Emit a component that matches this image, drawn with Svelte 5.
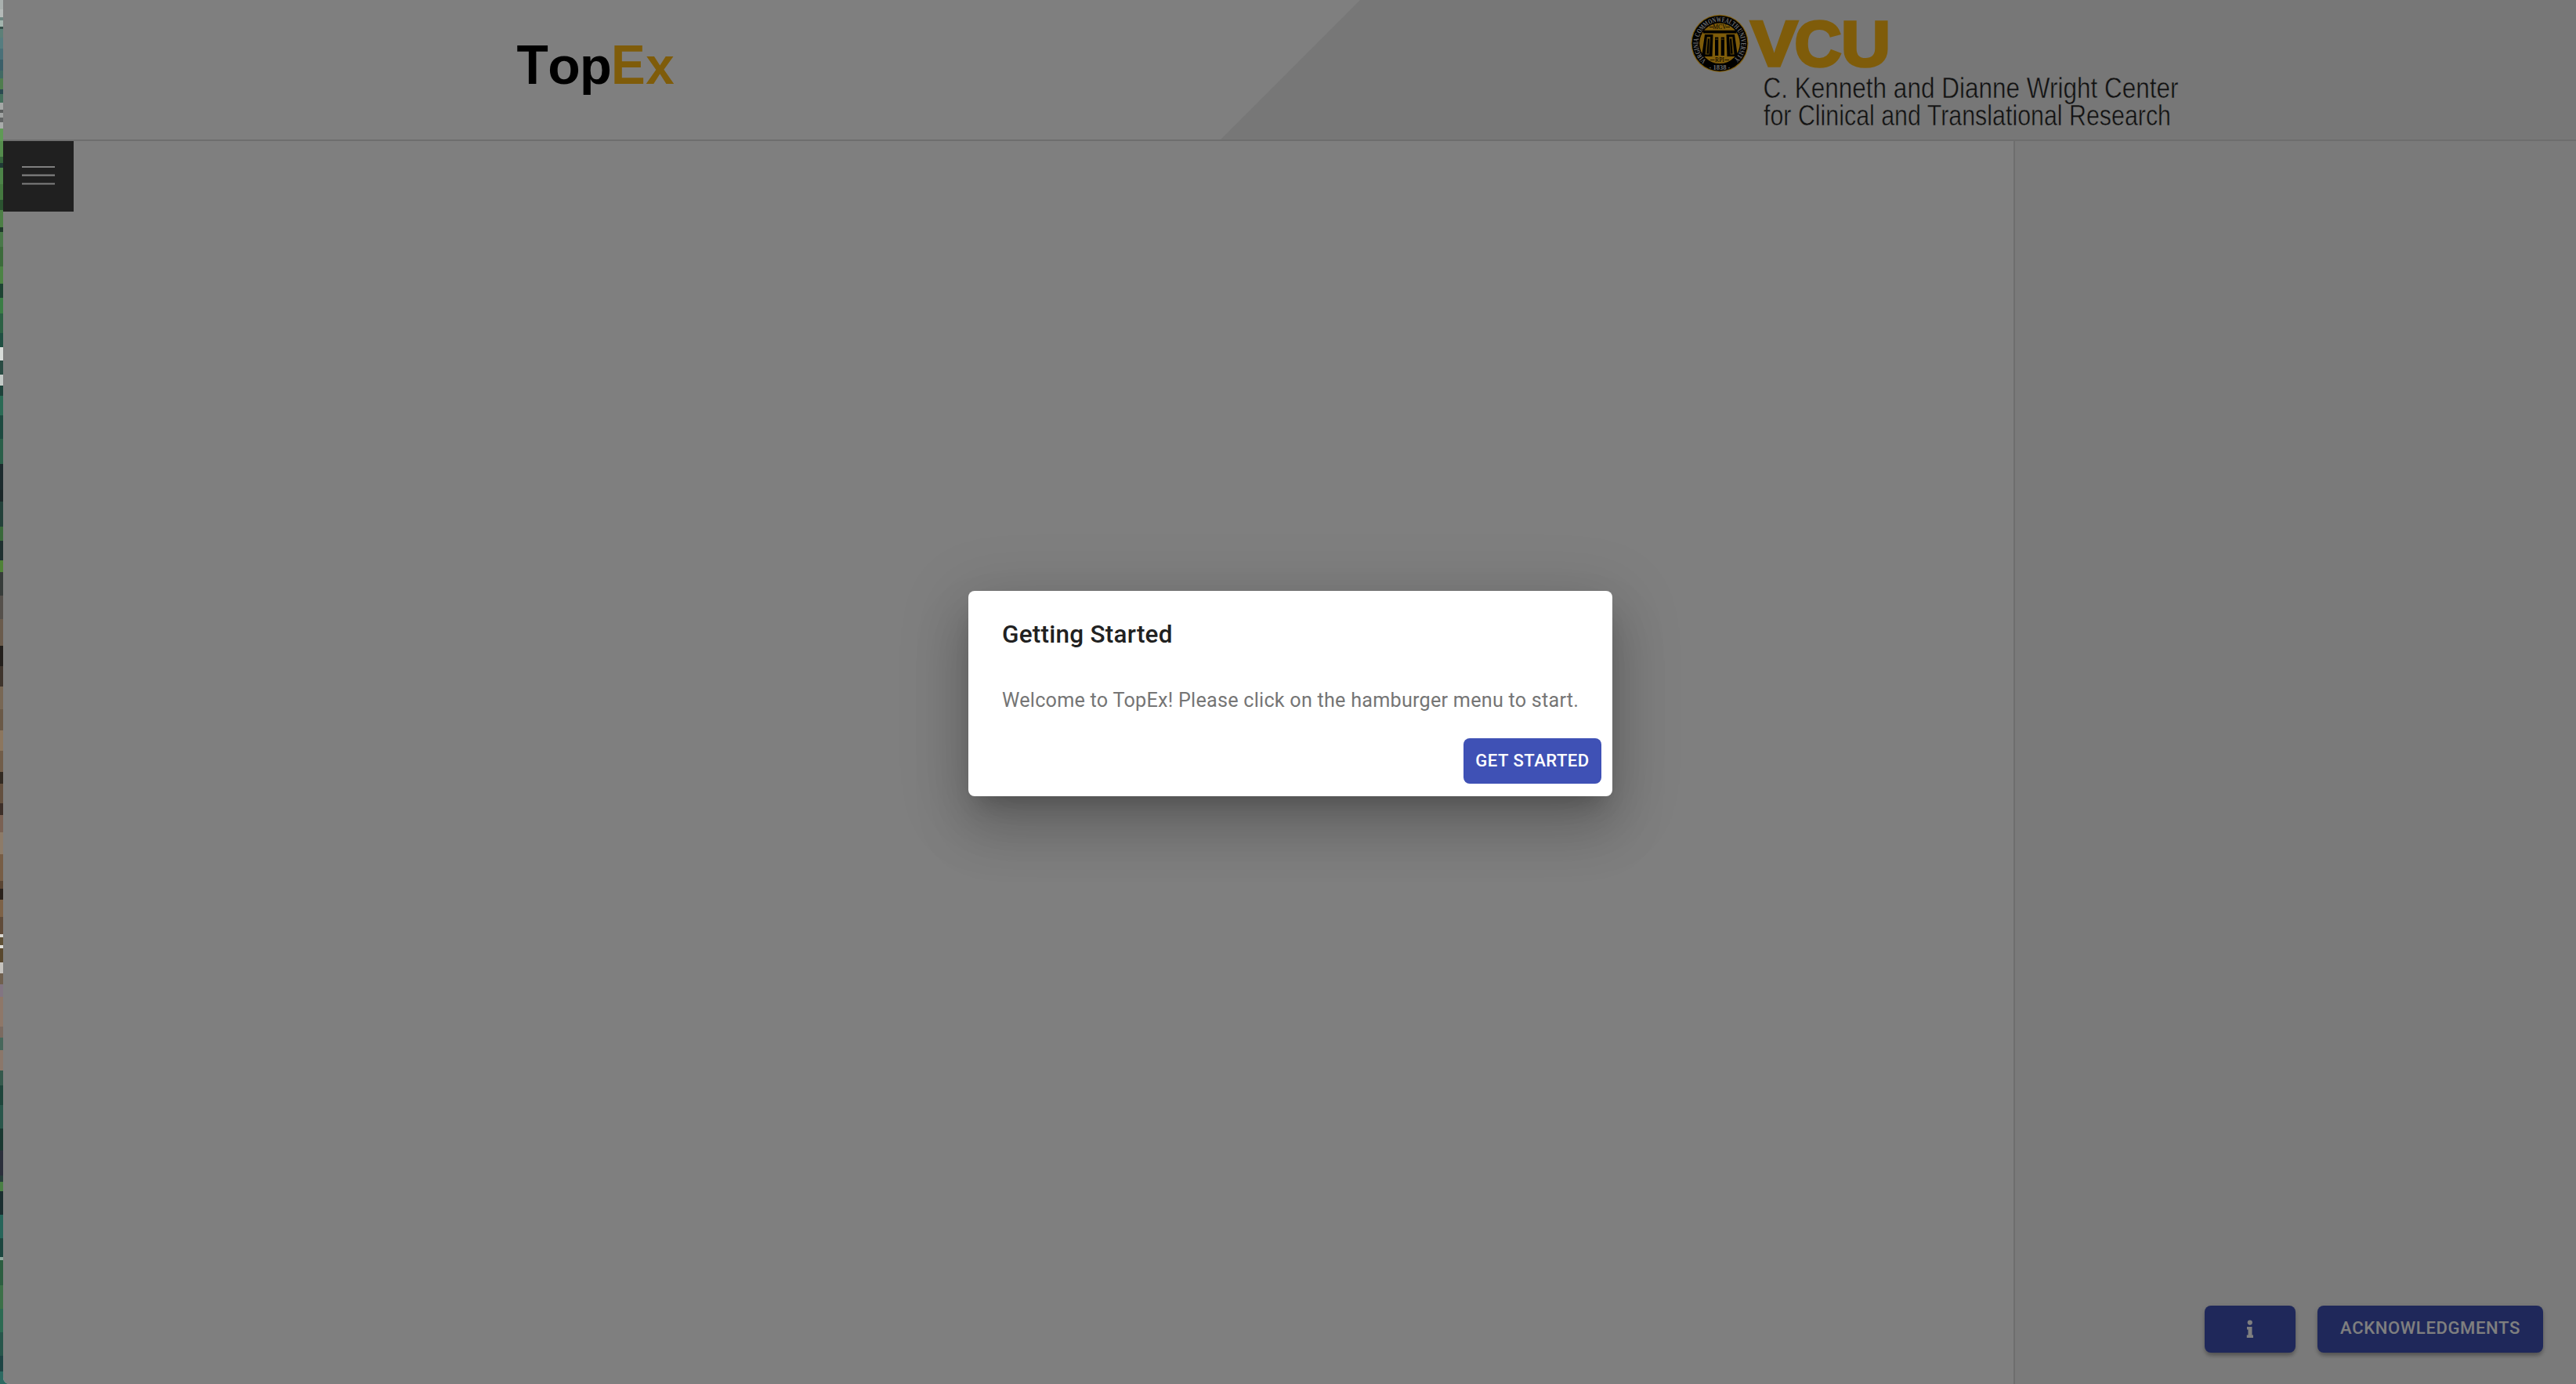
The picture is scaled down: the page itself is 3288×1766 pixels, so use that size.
<script>
  // Colours of the desktop wallpaper visible beside the window: [start y, colour]
  const wallpaper = [
    [0, '#a9b0ae'], [12, '#b4bab8'], [22, '#6d8580'], [26, '#a3b5ae'], [34, '#35504a'], [37, '#5d8078'],
    [48, '#567d80'], [62, '#4a7078'], [76, '#3b5f69'], [90, '#416a64'], [100, '#4f7d4e'], [114, '#2b4a50'],
    [120, '#456f5c'], [131, '#a5a8a6'], [140, '#5b5e5e'], [144, '#a0a3a2'], [150, '#626565'], [156, '#a9acab'],
    [164, '#5f9a55'], [180, '#548c4c'], [200, '#37663c'], [208, '#1f3a35'], [214, '#4d8448'], [235, '#44783f'],
    [255, '#2b5330'], [268, '#4c7f45'], [290, '#1e3a2a'], [296, '#497849'], [315, '#3c6b3b'], [340, '#4c8344'],
    [362, '#1d4433'], [380, '#3a7d45'], [400, '#2c6144'], [425, '#1f4f42'], [443, '#d8dcd9'], [460, '#2a4b43'],
    [478, '#c4cac7'], [492, '#1d423a'], [505, '#2b6a55'], [530, '#1d4a40'], [560, '#2a5f49'], [592, '#1c2b2e'],
    [625, '#1a2628'], [640, '#23413a'], [672, '#39693a'], [690, '#1f3030'], [715, '#4f8237'], [730, '#373c3a'],
    [760, '#55504b'], [790, '#6a5b4c'], [824, '#231f1c'], [850, '#3f352d'], [876, '#786754'], [905, '#6a5947'],
    [932, '#8c765e'], [958, '#715d49'], [985, '#322a22'], [1000, '#64503f'], [1025, '#3d2f29'], [1040, '#7a6153'],
    [1062, '#8d7b68'], [1090, '#775d45'], [1124, '#5a4533'], [1134, '#2a221c'], [1148, '#7d6247'],
    [1170, '#604b39'], [1192, '#dad8d2'], [1196, '#5f5036'], [1206, '#e0ded8'], [1210, '#59482e'],
    [1228, '#c6c3be'], [1242, '#70604f'], [1256, '#827582'], [1272, '#8e7768'], [1310, '#7b6a60'],
    [1324, '#47675b'], [1340, '#8b776a'], [1366, '#35594c'], [1385, '#1e453b'], [1410, '#29564b'],
    [1440, '#193831'], [1468, '#2b2f3b'], [1500, '#263e3a'], [1508, '#4a8045'], [1520, '#1a2e30'],
    [1550, '#27655a'], [1580, '#1c463f'], [1604, '#8ca79c'], [1608, '#2c5e40'], [1640, '#3c7048'],
    [1670, '#2c6a52'], [1700, '#27564b'], [1730, '#1d4444'], [1750, '#2d6a62'], [1766, '#28605a']
  ];
  const bands = wallpaper.slice(0, -1).map(([y, fill], i) => ({ y, fill, h: wallpaper[i + 1][0] - y }));
</script>

<div class="desktop">
  <svg class="wallpaper" viewBox="0 0 8 1766" preserveAspectRatio="none" aria-hidden="true">
    {#each bands as b}
      <rect x="0" y={b.y} width="8" height={b.h} fill={b.fill} />
    {/each}
  </svg>

  <div class="window">
    <header>
      <div class="brand">
        <svg class="topex" viewBox="0 0 260 80" role="img" aria-label="TopEx">
          <text y="66" font-family="Liberation Sans, sans-serif" font-weight="700" font-size="69.5"><tspan x="19.6" textLength="40.3" lengthAdjust="spacingAndGlyphs">T</tspan><tspan x="59.2" font-size="66" textLength="41.5" lengthAdjust="spacingAndGlyphs">o</tspan><tspan x="100" font-size="66" textLength="40.8" lengthAdjust="spacingAndGlyphs">p</tspan><tspan x="140" fill="#ffb914" textLength="43.7" lengthAdjust="spacingAndGlyphs">E</tspan><tspan x="184.3" font-size="66" fill="#ffb914" textLength="36.4" lengthAdjust="spacingAndGlyphs">x</tspan></text>
        </svg>
      </div>
      <div class="partner">
        <svg class="vcu" viewBox="2150 0 720 178" role="img" aria-label="VCU Wright Center">
          <circle cx="2195" cy="55.3" r="36.6" fill="#ffb914" />
          <circle cx="2195" cy="55.3" r="35.4" fill="#000" />
          <circle cx="2195" cy="55.3" r="25.8" fill="#ffb914" />
          <path id="lettering" fill="none" d="M2178 76.8 A27.4 27.4 0 1 1 2212 76.8" />
          <text font-family="Liberation Serif, serif" font-size="9.3" font-weight="700" fill="#d8d8d8">
            <textPath href="#lettering" textLength="133" lengthAdjust="spacingAndGlyphs">VIRGINIA COMMONWEALTH UNIVERSITY</textPath>
          </text>
          <text x="2195" y="88.7" text-anchor="middle" font-family="Liberation Serif, serif" font-size="8.5" font-weight="700" fill="#d8d8d8">· 1838 ·</text>
          <g font-family="Liberation Serif, serif" font-size="7.6" text-anchor="middle">
            <text x="2195" y="37.2">MCV</text>
            <text x="2195" y="79">RPI</text>
          </g>
          <path d="M2182 34.5h5M2203 34.5h5M2183 76.5h5.500M2201.500 76.5h5.500" stroke="#000" stroke-width=".8" />
          <path d="M2174 38.700h42.500v3.800h-42.500z" fill="#000" />
          <path d="M2176 44h10.500l-1 28h-13.500zM2203.500 44h10.500l4 28h-13.500z" fill="#000" />
          <path d="M2178.800 47h4.400l-1.600 22.500h-5zM2207 47h4.400l2.200 22.500h-5z" fill="#ffb914" opacity=".75" />
          <path d="M2180 49.500h2l-1 19h-2.600zM2208 49.500h2l1.600 19h-2.600z" fill="#000" />
          <path d="M2189 47.500h4.300v23.500h-4.300zM2196.700 47.500h4.300v23.500h-4.300z" fill="#000" />
          <path d="M2189.500 50h3.300M2197.200 50h3.300" stroke="#ffb914" stroke-width=".8" />
          <g fill="#ffb914" stroke="#ffb914" stroke-width="3.500" font-family="Liberation Sans, sans-serif" font-weight="700" font-size="82">
            <text x="2234.500" y="83.500" textLength="60" lengthAdjust="spacingAndGlyphs">V</text>
            <text x="2290.500" y="84" textLength="60" lengthAdjust="spacingAndGlyphs">C</text>
            <text x="2350" y="84" textLength="63" lengthAdjust="spacingAndGlyphs">U</text>
          </g>
          <g class="center-name">
            <text x="2250.500" y="124.800" textLength="530" lengthAdjust="spacingAndGlyphs">C. Kenneth and Dianne Wright Center</text>
            <text x="2251" y="159.800" textLength="520" lengthAdjust="spacingAndGlyphs">for Clinical and Translational Research</text>
          </g>
        </svg>
      </div>
    </header>

    <div class="body">
      <main>
        <button class="menu" aria-label="Menu">
          <svg viewBox="0 0 90 90">
            <path d="M24 32h42v2h-42zM24 42.600h42v2.200h-42zM24 53.400h42v2.200h-42z" fill="#fff" />
          </svg>
        </button>
      </main>
      <aside>
        <button class="action info" aria-label="Information">
          <svg viewBox="0 0 10 24">
            <circle cx="4.800" cy="3.600" r="3.100" fill="#fff" />
            <path d="M1 9h6.500v10.500H9V23H.8v-3.500h1.700v-7H1z" fill="#fff" />
          </svg>
        </button>
        <button class="action ack">Acknowledgments</button>
      </aside>
    </div>

    <div class="backdrop">
      <div class="dialog" role="dialog" aria-label="Getting Started">
        <h2>Getting Started</h2>
        <p>Welcome to TopEx! Please click on the hamburger menu to start.</p>
        <div class="actions">
          <button class="start">Get Started</button>
        </div>
      </div>
    </div>
  </div>
</div>

<style>
  :global(body) {
    margin: 0;
    background: #28605a;
  }

  .desktop {
    display: grid;
    grid-template-columns: 4px 1fr;
    width: 3288px;
    height: 1766px;
    overflow: hidden;
    font-family: Roboto, sans-serif;
  }

  .wallpaper {
    width: 8px;
    height: 1766px;
  }

  .window {
    position: relative;
    display: flex;
    flex-direction: column;
    background: #fff;
    border-bottom-left-radius: 8px;
    overflow: hidden;
  }

  header {
    display: flex;
    height: 178px;
    flex: none;
    border-bottom: 2px solid #dcdcdc;
  }

  .brand {
    width: 1554px;
    display: flex;
    align-items: center;
  }

  .topex {
    width: 260px;
    height: 80px;
    margin-left: 636px;
    margin-bottom: 17px;
  }

  .partner {
    flex: 1;
    background: #efefef;
    clip-path: polygon(178px 0, 100% 0, 100% 100%, 0 100%);
  }

  .vcu {
    display: block;
    width: 720px;
    height: 178px;
    margin-left: 592px;
  }

  /* The outline in the panel colour thins the letter strokes */
  .center-name {
    fill: #222;
    stroke: #efefef;
    stroke-width: 0.5px;
    font-family: 'Liberation Sans', sans-serif;
    font-size: 36.5px;
  }

  .body {
    display: flex;
    flex: 1;
  }

  main {
    width: 2566px;
  }

  button {
    border: 0;
    padding: 0;
    font-family: inherit;
    font-weight: 500;
    color: #fff;
    text-transform: uppercase;
  }

  .menu {
    display: block;
    width: 90px;
    height: 90px;
    background: #404040;
  }

  .menu svg {
    display: block;
  }

  aside {
    flex: 1;
    display: flex;
    justify-content: flex-end;
    align-items: flex-end;
    gap: 28px;
    padding: 0 42px 40px 0;
    border-left: 2px solid #dcdcdc;
    background: #f5f5f5;
  }

  .action {
    display: flex;
    justify-content: center;
    align-items: center;
    height: 60px;
    border-radius: 8px;
    background: #3f51b5;
    box-shadow:
      0 5px 7px -4px rgba(0, 0, 0, 0.2),
      0 4px 4px rgba(0, 0, 0, 0.14),
      0 2px 9px rgba(0, 0, 0, 0.12);
  }

  .info {
    width: 116px;
  }

  .info svg {
    width: 10px;
    height: 24px;
  }

  .ack {
    box-sizing: border-box;
    width: 288px;
    font-size: 22.05px;
    letter-spacing: 0.62px;
    padding-bottom: 3px;
  }

  .backdrop {
    position: absolute;
    inset: 0;
    display: flex;
    justify-content: center;
    align-items: center;
    background: rgba(0, 0, 0, 0.5);
  }

  .dialog {
    box-sizing: border-box;
    width: 822px;
    height: 262px;
    margin: 4px 0 0 2px;
    border-radius: 8px;
    background: #fff;
    box-shadow:
      0 20px 27px -13px rgba(0, 0, 0, 0.2),
      0 43px 68px 5px rgba(0, 0, 0, 0.14),
      0 16px 83px 14px rgba(0, 0, 0, 0.12);
  }

  h2 {
    margin: 0;
    padding: 30px 43px 28px;
    font-size: 31.5px;
    line-height: 52px;
    font-weight: 500;
    letter-spacing: 0.24px;
    color: #212121;
  }

  p {
    margin: 0;
    padding: 10px 43px 0;
    font-size: 25.2px;
    line-height: 40px;
    letter-spacing: 0.236px;
    color: #757575;
    white-space: nowrap;
  }

  .actions {
    display: flex;
    justify-content: flex-end;
    padding: 28px 14px 0;
  }

  .start {
    width: 176px;
    height: 58px;
    border-radius: 8px;
    background: #3f51b5;
    font-size: 22.05px;
    letter-spacing: 0.5px;
    padding-bottom: 1px;
  }
</style>
